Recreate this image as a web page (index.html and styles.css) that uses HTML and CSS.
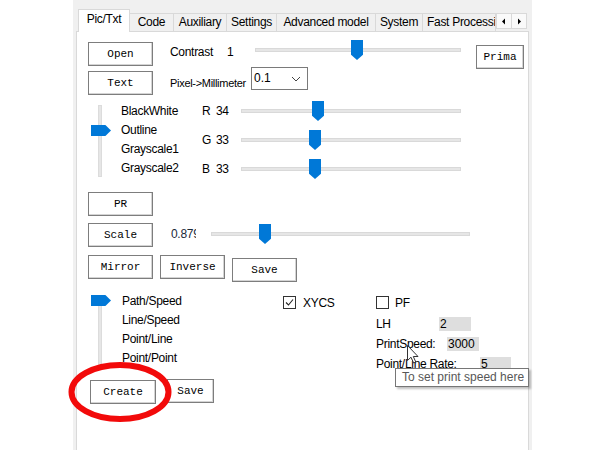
FILE: index.html
```html
<!DOCTYPE html>
<html lang="en">
<head>
    <meta charset="UTF-8">
    <title>Pic/Txt</title>
    <link rel="stylesheet" href="styles.css">
</head>
<body>
<div class="screen">
    <div class="window">
        <div class="tabbar">
            <div class="tab active w-pic">Pic/Txt</div>
            <div class="tab w-code">Code</div>
            <div class="tab w-aux">Auxiliary</div>
            <div class="tab w-set">Settings</div>
            <div class="tab w-adv">Advanced model</div>
            <div class="tab w-sys">System</div>
            <div class="tab w-fast">Fast Processing</div>
            <div class="tab-scroll">
                <span class="arrow"><svg width="6" height="7" viewBox="0 0 6 7"><path d="M4 0.5 L1 3.5 L4 6.5 Z" fill="#000"/></svg></span>
                <span class="arrow"><svg width="6" height="7" viewBox="0 0 6 7"><path d="M2 0.5 L5 3.5 L2 6.5 Z" fill="#000"/></svg></span>
            </div>
        </div>

        <div class="panel">
            <!-- open / contrast -->
            <div class="row">
                <button class="btn">Open</button>
                <span class="label contrast-label">Contrast</span>
                <span class="label contrast-value">1</span>
                <div class="slider contrast-slider"><div class="track"></div><div class="thumb" style="left:96px"></div></div>
                <button class="btn prima">Prima</button>
            </div>

            <!-- text / pixel -> mm -->
            <div class="row row-gap5">
                <button class="btn">Text</button>
                <span class="label small pixel-label">Pixel-&gt;Millimeter</span>
                <div class="combo">
                    <span>0.1</span>
                    <svg width="10" height="6" viewBox="0 0 10 6"><path d="M1 1 L5 5 L9 1" fill="none" stroke="#444" stroke-width="1"/></svg>
                </div>
            </div>

            <!-- mode + rgb -->
            <div class="group mode-group">
                <div class="vslider">
                    <div class="vtrack vtrack-top"></div>
                    <div class="vthumb vthumb-top"></div>
                </div>
                <div class="label-list mode-list">
                    <div>BlackWhite</div>
                    <div>Outline</div>
                    <div>Grayscale1</div>
                    <div>Grayscale2</div>
                </div>
                <div class="rgb-list">
                    <div class="rgb-row">
                        <span class="label rgb-letter">R</span><span class="label rgb-value">34</span>
                        <div class="slider rgb-slider"><div class="track"></div><div class="thumb" style="left:71px"></div></div>
                    </div>
                    <div class="rgb-row">
                        <span class="label rgb-letter">G</span><span class="label rgb-value">33</span>
                        <div class="slider rgb-slider"><div class="track"></div><div class="thumb" style="left:68px"></div></div>
                    </div>
                    <div class="rgb-row">
                        <span class="label rgb-letter">B</span><span class="label rgb-value">33</span>
                        <div class="slider rgb-slider"><div class="track"></div><div class="thumb" style="left:68px"></div></div>
                    </div>
                </div>
            </div>

            <div class="row row-pr">
                <button class="btn">PR</button>
            </div>

            <div class="row row-gap7">
                <button class="btn">Scale</button>
                <span class="label scale-value">0.879</span>
                <div class="slider scale-slider"><div class="track"></div><div class="thumb" style="left:48px"></div></div>
            </div>

            <div class="row row-gap8">
                <button class="btn">Mirror</button>
                <button class="btn btn-next">Inverse</button>
                <button class="btn btn-next btn-low">Save</button>
            </div>

            <!-- path mode + print settings -->
            <div class="group path-group">
                <div class="vslider path-slider">
                    <div class="vtrack vtrack-bottom"></div>
                    <div class="vthumb vthumb-bottom"></div>
                </div>
                <div class="label-list path-list">
                    <div>Path/Speed</div>
                    <div>Line/Speed</div>
                    <div>Point/Line</div>
                    <div>Point/Point</div>
                </div>
                <div class="check-col">
                    <div class="check">
                        <span class="box"><svg width="11" height="11" viewBox="0 0 11 11"><path d="M2 5.5 L4.5 8 L9 2.5" fill="none" stroke="#222" stroke-width="1.1"/></svg></span>
                        <span class="label">XYCS</span>
                    </div>
                </div>
                <div class="print-col">
                    <div class="check">
                        <span class="box"></span>
                        <span class="label">PF</span>
                    </div>
                    <div class="field first-field">
                        <span class="label lbl-lh">LH</span><span class="input in-lh">2</span>
                    </div>
                    <div class="field">
                        <span class="label lbl-speed">PrintSpeed:</span><span class="input in-speed">3000</span>
                    </div>
                    <div class="field">
                        <span class="label lbl-rate">Point/Line Rate:</span><span class="input in-rate">5</span>
                    </div>
                </div>
            </div>

            <div class="row row-gap7">
                <button class="btn btn-create">Create</button>
                <button class="btn btn-save2">Save</button>
            </div>
        </div>
    </div>

    <svg class="cursor" width="13" height="20" viewBox="0 0 13 20">
        <path d="M0.5 0.5 L0.5 15.5 L4 12.2 L6.6 18 L8.8 17 L6.3 11.5 L11 11.5 Z" fill="#fff" stroke="#333" stroke-width="1"/>
    </svg>
    <div class="tooltip">To set print speed here</div>
    <svg class="mark" width="112" height="68" viewBox="0 0 112 68">
        <ellipse cx="56" cy="34" rx="48.5" ry="27" fill="none" stroke="#f20a0a" stroke-width="6"/>
    </svg>
</div>
</body>
</html>
```

FILE: styles.css
```css
* {
    box-sizing: border-box;
    margin: 0;
    padding: 0;
}

body {
    background: #fff;
    font-family: 'Liberation Sans', Arial, sans-serif;
    font-size: 12px;
    color: #000;
}

.screen {
    position: relative;
    width: 600px;
    height: 450px;
    overflow: hidden;
}

.window {
    margin-left: 73px;
    width: 459px;
    height: 450px;
    background: #f0f0f0;
    overflow: hidden;
}

/* tabs */
.tabbar {
    display: flex;
    align-items: flex-end;
    height: 31px;
    padding-left: 5px;
}

.tab {
    height: 18px;
    border: 1px solid #d9d9d9;
    border-bottom: none;
    margin-left: -1px;
    background: #f0f0f0;
    text-align: center;
    line-height: 17px;
    letter-spacing: -0.3px;
    white-space: nowrap;
    overflow: hidden;
}

.tab.active {
    position: relative;
    z-index: 1;
    height: 23px;
    margin-bottom: -1px;
    margin-left: 0;
    background: #fff;
    line-height: 19px;
    border-bottom: none;
}

.w-pic { width: 52px; }
.w-code { width: 45px; }
.w-aux { width: 54px; }
.w-set { width: 51px; }
.w-adv { width: 100px; }
.w-sys { width: 48px; }
.w-fast { width: 74px; text-align: left; padding-left: 4px; }

.tab-scroll {
    display: flex;
    align-self: flex-start;
    margin-top: 13px;
    position: relative;
    z-index: 2;
}

.arrow {
    display: flex;
    align-items: center;
    justify-content: center;
    width: 16px;
    height: 16px;
    border: 1px solid #d9d9d9;
    background: #fafafa;
}

.arrow + .arrow {
    margin-left: -1px;
}

/* main panel */
.panel {
    margin-left: 3px;
    width: 453px;
    height: 430px;
    background: #fff;
    border: 1px solid #d9d9d9;
    padding: 10px 0 0 11px;
}

.row {
    display: flex;
    align-items: flex-start;
    height: 24px;
}

.row-gap5 { margin-top: 5px; }
.row-gap7 { margin-top: 7px; }
.row-gap8 { margin-top: 8px; }
.row-pr { margin-top: 11px; }

.btn {
    width: 65px;
    height: 24px;
    flex-shrink: 0;
    border: 1px solid #7d7d7d;
    background: #fff;
    box-shadow: inset -1px -1px 0 #d4d4d4;
    font-family: 'Liberation Mono', 'Courier New', monospace;
    font-size: 11px;
    color: #000;
}

.btn-next { margin-left: 7px; }
.btn-low { margin-top: 3px; }

.prima {
    width: 48px;
    margin-left: 15px;
    margin-top: 3px;
}

.label {
    letter-spacing: -0.3px;
    white-space: nowrap;
    line-height: 20px;
}

.small {
    font-size: 11px;
}

.contrast-label {
    margin-left: 17px;
    width: 57px;
}

.contrast-value {
    width: 28px;
}

/* sliders */
.slider {
    position: relative;
    height: 20px;
    flex-shrink: 0;
}

.track {
    position: absolute;
    left: 0;
    right: 0;
    top: 8px;
    height: 4px;
    background: #e6e6e6;
    border: 1px solid #d9d9d9;
}

.thumb {
    position: absolute;
    top: 0;
    width: 12px;
    height: 20px;
    background: #0078d7;
    clip-path: polygon(0 0, 100% 0, 100% 74%, 50% 100%, 0 74%);
}

.contrast-slider {
    width: 206px;
    margin-top: -2px;
}

.pixel-label {
    margin-left: 17px;
    width: 81px;
    line-height: 24px;
}

.combo {
    display: flex;
    align-items: center;
    justify-content: space-between;
    width: 57px;
    height: 23px;
    margin-top: -4px;
    padding: 0 6px 0 2px;
    border: 1px solid #7a7a7a;
    background: #fff;
    font-size: 12px;
    line-height: 14px;
}

.combo span {
    align-self: flex-start;
    margin-top: 3px;
}

/* grouped blocks */
.group {
    display: flex;
    height: 80px;
}

.mode-group { margin-top: 6px; }
.path-group { margin-top: 13px; }

.vslider {
    position: relative;
    width: 33px;
    flex-shrink: 0;
}

.path-slider { width: 34px; }

.vtrack {
    position: absolute;
    left: 10px;
    width: 4px;
    background: #e6e6e6;
    border: 1px solid #dcdcdc;
}

.vtrack-top { top: 4px; height: 72px; }
.vtrack-bottom { top: 12px; height: 64px; }

.vthumb {
    position: absolute;
    left: 3px;
    width: 20px;
    height: 11px;
    background: #0078d7;
    clip-path: polygon(0 0, 72% 0, 100% 50%, 72% 100%, 0 100%);
}

.vthumb-top { top: 24px; }
.vthumb-bottom { top: 3px; }

.label-list {
    line-height: 19px;
    letter-spacing: -0.3px;
    white-space: nowrap;
}

.mode-list {
    width: 81px;
    padding-top: 1px;
}

.path-list {
    width: 161px;
}

.rgb-list {
    display: flex;
    flex-direction: column;
    gap: 9px;
}

.rgb-row {
    display: flex;
    height: 20px;
}

.rgb-letter { width: 14px; }
.rgb-value { width: 25px; }
.rgb-slider { width: 220px; }

.scale-value {
    margin-left: 18px;
    width: 25px;
    overflow: hidden;
    line-height: 23px;
    color: #1b2a3a;
}

.scale-slider {
    width: 259px;
    margin-left: 15px;
    margin-top: 1px;
}

/* checkboxes and fields */
.check-col {
    width: 93px;
}

.check {
    display: flex;
    align-items: center;
    gap: 7px;
    height: 19px;
    padding-top: 2px;
}

.box {
    display: flex;
    align-items: center;
    justify-content: center;
    width: 13px;
    height: 13px;
    border: 1px solid #333;
    background: #fff;
}

.print-col .check { gap: 6px; }

.field {
    display: flex;
    align-items: center;
    height: 16px;
    margin-top: 4px;
}

.first-field { margin-top: 5px; }

.field .label {
    line-height: 16px;
}

.lbl-lh { width: 63px; }
.lbl-speed { width: 71px; }
.lbl-rate { width: 104px; }

.input {
    height: 14px;
    background: #dedede;
    line-height: 14px;
    padding-left: 1px;
}

.in-lh { width: 32px; }
.in-speed { width: 32px; }
.in-rate { width: 31px; }

.btn-create {
    width: 66px;
    margin-left: 2px;
    margin-top: 1px;
}

.btn-save2 {
    width: 47px;
    margin-left: 11px;
}

/* overlays */
.cursor {
    position: absolute;
    left: 407px;
    top: 345px;
}

.tooltip {
    position: absolute;
    left: 395px;
    top: 368px;
    width: 134px;
    height: 19px;
    padding-left: 6px;
    border: 1px solid #767676;
    background: #fff;
    color: #575757;
    font-size: 12px;
    line-height: 17px;
    white-space: nowrap;
    overflow: hidden;
    box-shadow: 2px 2px 2px rgba(0, 0, 0, 0.25);
}

.mark {
    position: absolute;
    left: 64px;
    top: 358px;
}
```
